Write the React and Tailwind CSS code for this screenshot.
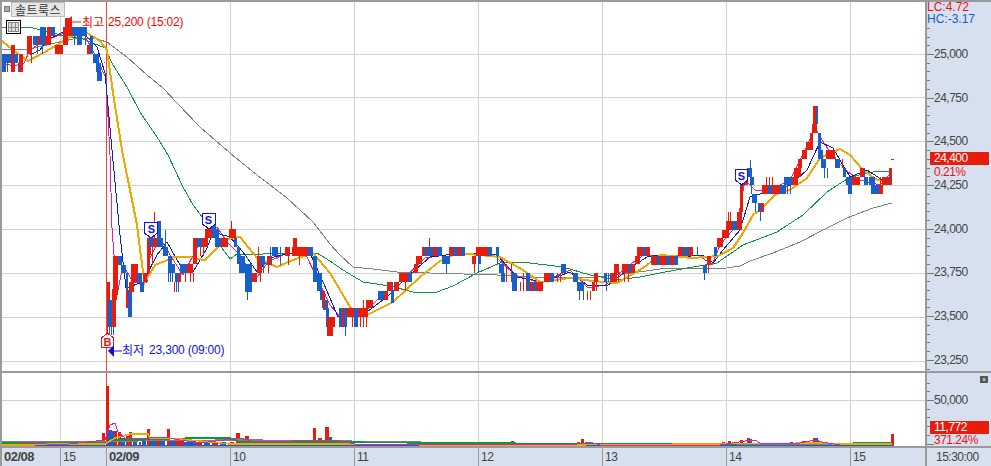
const R = "#e91c0c", B = "#1560cc";

const gridX = [60, 106, 230, 354, 478, 602, 726, 850];
const gridY = [54, 97, 141, 185, 229, 273, 317, 361];

const blocks = [
  [1,18,54,63,"b"],[2,6,54,72,"b"],[11,15,45,72,"r"],[13,17,54,63,"b"],[19,23,54,72,"r"],
  [27,32,36,54,"r"],[33,38,36,45,"b"],[38,43,36,45,"r"],[40,46,27,45,"b"],[45,49,36,45,"r"],[47,51,27,45,"r"],[51,55,27,36,"b"],
  [55,63,45,54,"r"],[63,68,27,45,"r"],[65,72,18,36,"r"],[72,82,27,36,"b"],[77,82,36,45,"b"],[82,87,27,36,"b"],
  [87,93,45,54,"r"],[90,93,36,54,"b"],[93,99,54,63,"b"],[96,101,63,72,"b"],[97,102,72,81,"b"],
  [107,110,282,327,"r"],[108,112,300,327,"b"],[112,116,289,327,"r"],[113,118,256,295,"r"],[118,122,256,265,"b"],[121,126,265,273,"b"],
  [126,128,273,300,"b"],[126,130,291,308,"r"],[128,132,290,317,"b"],[129,134,282,292,"r"],[131,135,264,282,"r"],[135,138,264,273,"b"],[134,138,264,282,"r"],
  [137,142,273,282,"b"],[140,144,282,292,"b"],[143,147,273,282,"r"],[147,150,238,273,"r"],[149,156,238,247,"b"],[153,158,238,247,"r"],[157,161,221,247,"b"],[158,163,238,247,"b"],
  [163,168,247,256,"b"],[168,172,256,273,"b"],[172,175,264,273,"b"],[175,178,273,282,"b"],[178,181,273,282,"r"],[180,187,264,273,"b"],[187,193,264,273,"r"],
  [193,197,238,264,"r"],[197,202,238,247,"b"],[202,207,238,247,"r"],[205,208,229,247,"r"],[211,216,213,238,"b"],[208,212,229,238,"r"],[215,219,229,247,"b"],[218,222,238,247,"b"],[221,228,238,247,"r"],
  [229,236,229,238,"r"],[234,237,238,247,"b"],[237,240,247,264,"b"],[239,245,256,273,"b"],[245,252,264,292,"b"],[252,257,273,282,"r"],[257,262,256,273,"r"],[260,265,256,265,"b"],
  [267,272,256,265,"r"],[272,278,247,256,"b"],[285,290,247,256,"r"],[293,297,238,256,"r"],[292,308,247,256,"r"],[308,313,247,256,"b"],[313,317,256,282,"b"],[317,322,273,291,"b"],
  [320,325,291,300,"b"],[322,325,291,308,"r"],[323,328,300,310,"b"],[326,329,308,327,"b"],[327,333,317,336,"r"],[330,335,317,327,"r"],
  [339,368,308,317,"r"],[339,347,308,327,"b"],[342,344,308,327,"r"],[350,354,308,317,"r"],[354,358,308,327,"b"],[366,373,300,308,"r"],
  [378,386,291,300,"b"],[384,387,291,300,"r"],[387,392,282,291,"r"],[391,394,291,303,"b"],[394,399,282,291,"r"],[399,408,273,282,"r"],[404,408,273,282,"r"],[408,412,273,282,"b"],
  [414,418,264,273,"r"],[416,422,256,264,"r"],[422,442,247,256,"r"],[424,427,247,256,"b"],[428,433,247,256,"b"],[437,442,247,256,"b"],[442,450,256,264,"b"],
  [449,465,247,256,"r"],[453,457,247,256,"b"],[461,465,247,256,"b"],[472,476,256,264,"r"],[476,488,247,256,"r"],[478,481,256,264,"b"],[488,492,247,256,"b"],[496,499,247,256,"b"],
  [499,504,264,273,"b"],[501,504,273,282,"b"],[512,517,273,291,"b"],[526,530,273,291,"b"],[530,543,282,291,"r"],[533,536,282,291,"b"],[544,550,273,282,"r"],[550,554,273,282,"b"],
  [561,566,264,273,"b"],[573,578,273,282,"b"],[577,584,282,291,"b"],[592,595,282,291,"r"],[594,598,273,282,"r"],[604,607,273,282,"b"],[611,617,273,282,"r"],[614,619,264,273,"r"],
  [622,635,264,273,"r"],[628,631,264,273,"b"],[635,640,256,264,"r"],[637,650,247,256,"r"],[643,646,247,256,"b"],[651,660,256,265,"b"],[652,657,256,265,"r"],
  [660,678,256,265,"r"],[666,670,256,265,"b"],[674,678,256,265,"b"],[678,693,247,256,"r"],[682,685,247,256,"b"],[686,689,247,256,"b"],
  [703,707,265,273,"b"],[707,711,256,265,"r"],[714,717,247,256,"b"],[717,723,238,247,"r"],[722,729,230,238,"r"],[726,732,221,230,"r"],[732,737,221,230,"b"],[737,742,212,230,"r"],
  [740,743,185,212,"r"],[743,747,170,185,"r"],[747,752,168,177,"b"],[750,754,177,185,"b"],[752,757,194,203,"b"],[758,761,203,212,"b"],[761,764,203,212,"r"],[762,768,185,194,"r"],
  [768,772,185,194,"b"],[772,778,185,194,"r"],[776,780,185,194,"r"],[780,786,185,194,"b"],[784,792,177,185,"b"],[792,798,177,185,"r"],[794,801,168,177,"r"],[798,802,159,168,"r"],[802,807,150,159,"r"],
  [806,813,142,150,"r"],[810,813,133,142,"r"],[812,817,124,133,"r"],[813,817,106,124,"r"],[816,818,106,124,"b"],[818,821,133,150,"b"],[818,823,150,159,"b"],[821,826,159,168,"b"],
  [826,835,150,159,"r"],[835,840,159,168,"b"],[843,846,168,177,"b"],[848,852,185,194,"b"],[846,852,177,185,"b"],[852,860,177,185,"r"],[860,864,168,177,"r"],[864,868,177,185,"b"],[869,875,177,185,"b"],
  [871,875,185,194,"b"],[875,880,185,194,"b"],[879,883,185,194,"r"],[882,888,177,185,"r"],[888,890,177,185,"b"],[889,892,168,185,"r"],[891,894,159,160,"r"],
];

const wicks = [
  [7,63,72,"r"],[18,63,72,"b"],[31,54,63,"r"],[37,45,54,"b"],[42,45,54,"b"],[66,36,45,"r"],[74,36,45,"b"],[85,36,45,"b"],[104,62,63,"r"],
  [107,282,335,"r"],[109,327,335,"b"],[111,327,335,"b"],[113,327,335,"b"],[116,282,300,"r"],[154,212,240,"r"],[152,247,265,"r"],[150,247,255,"r"],[165,230,250,"b"],
  [168,273,282,"b"],[170,273,282,"b"],[172,273,282,"b"],[174,282,292,"r"],[176,282,292,"b"],[178,282,292,"b"],[185,273,282,"r"],[190,273,282,"r"],[193,273,282,"r"],[200,247,256,"r"],[203,247,256,"r"],[231,221,229,"r"],[247,292,300,"b"],[258,247,256,"r"],[260,273,282,"r"],[263,265,273,"b"],[268,265,273,"r"],[270,247,265,"b"],[280,247,265,"b"],[288,256,265,"r"],[299,256,265,"r"],[325,300,310,"r"],
  [345,327,336,"b"],[352,317,327,"r"],[360,317,327,"r"],[363,317,327,"r"],[366,317,327,"r"],[363,300,308,"r"],[387,291,300,"r"],[392,282,291,"b"],[405,282,291,"r"],[429,238,247,"r"],[446,264,273,"b"],[474,264,273,"r"],[478,264,273,"b"],[497,256,264,"b"],[504,273,282,"b"],[506,264,282,"r"],[511,264,282,"r"],[520,282,291,"r"],[523,273,291,"r"],[526,282,291,"r"],[557,273,282,"r"],[560,273,282,"r"],[579,291,300,"b"],[583,291,300,"b"],[587,291,300,"r"],[590,291,300,"r"],[596,282,291,"r"],[606,282,291,"b"],[608,273,282,"b"],[610,273,282,"b"],[618,273,282,"r"],[624,273,282,"r"],[628,273,282,"r"],
  [697,247,256,"b"],[704,273,280,"b"],[708,265,273,"r"],[728,212,221,"r"],[730,212,221,"r"],[750,160,168,"b"],[747,177,185,"r"],[751,185,194,"b"],[755,203,212,"b"],[760,212,221,"b"],[766,177,185,"r"],[769,177,185,"r"],[772,177,185,"r"],[790,185,194,"b"],[787,185,194,"r"],[824,168,178,"b"],[827,168,178,"b"],[842,159,168,"r"],[864,168,177,"b"],[880,177,185,"r"],[885,177,185,"r"],
];

const gray = "2,50 30,49 55,43 73,39 93,38 107,42 127,57 147,75 163,88 177,103 200,127 230,153 257,175 287,198 313,222 330,244 340,255 353,267 373,269 397,272 430,273 463,274 497,275 530,277 597,277 617,275 660,269 727,268 740,266 750,261 773,253 800,242 823,230 847,218 873,208 892,203";
const green = "2,28 7,27 33,28 50,32 67,37 80,38 93,43 105,48 113,65 127,87 140,112 157,137 168,155 182,185 193,205 203,218 213,235 222,248 230,259 237,254 263,254 300,253 317,253 330,261 343,270 363,282 390,286 413,292 437,292 453,286 477,273 500,263 510,262 530,263 563,267 590,275 617,280 640,277 660,273 693,267 717,263 743,245 777,232 803,215 827,192 850,177 873,172 892,171";
const orange = "2,41 13,50 28,61 43,53 57,45 70,37 87,33 100,41 107,50 113,93 122,150 127,175 137,225 143,272 145,282 155,265 165,261 173,257 190,257 197,259 205,260 217,248 230,238 240,237 257,258 277,267 293,260 313,253 330,273 343,295 353,312 367,315 393,302 420,277 440,261 457,253 480,255 500,257 523,270 540,282 570,278 593,281 617,283 643,268 660,255 693,258 718,256 733,248 743,233 753,215 760,210 777,193 790,190 807,178 820,158 840,149 850,155 863,170 877,180 892,182";
const navy = "30,55 40,50 47,40 67,30 83,33 97,47 105,73 112,150 120,235 126,288 143,282 157,255 167,242 180,265 193,272 207,248 213,232 230,237 243,252 257,272 270,258 290,253 310,253 320,275 330,298 338,317 363,315 387,297 407,277 430,257 463,253 497,255 517,277 543,282 570,272 587,285 607,286 630,268 647,257 660,255 680,257 703,255 713,263 723,250 740,230 750,197 767,192 790,185 807,170 820,142 833,148 850,177 867,170 887,183";
const pink = "2,63 14,66 24,63 30,50 42,42 60,35 72,30 84,34 95,55 106,78 108,117 110,155 112,228 117,295 123,265 133,282 147,282 150,258 160,238 170,255 183,275 197,248 217,227 227,242 240,255 255,280 268,262 285,254 305,253 318,280 330,305 340,317 362,315 380,297 405,277 425,258 460,253 495,256 515,275 540,283 570,270 588,288 605,285 628,266 645,254 660,258 680,255 700,256 712,265 720,245 737,225 745,180 755,190 770,190 790,180 805,150 815,128 825,145 845,170 860,180 880,185 892,172";

const volBars = [
  [11,14,442,R],[21,25,443,R],[27,34,442,R],[68,71,442,R],[94,97,441,R],[96,99,440,R],[102,105,433,R],
  [106,109,386,R],[108,112,430,B],[112,115,431,B],[114,117,431,R],[118,121,432,R],[121,125,438,B],[126,129,436,R],[129,132,432,R],[133,137,441,B],[139,141,442,R],[142,146,440,B],[147,150,429,R],[150,156,437,B],[156,160,438,R],[160,165,440,B],[167,170,429,R],[170,175,440,B],[175,178,439,R],[178,184,441,R],[184,190,442,B],[190,196,441,B],[196,202,442,R],[204,210,442,B],[212,218,442,R],[220,226,442,B],
  [230,234,442,R],[236,240,433,R],[240,243,440,R],[243,246,441,B],[245,249,436,R],[250,256,442,B],[259,262,439,R],[263,268,442,B],[270,275,442,R],[278,284,443,B],[288,294,443,R],[298,304,443,B],[313,316,428,R],[318,322,438,R],[322,325,440,B],[325,329,427,R],[329,332,437,B],
  [333,337,441,B],[338,342,441,R],[342,345,442,B],[345,348,441,R],[348,354,442,B],[422,425,442,R],[511,514,441,R],[577,580,442,R],[581,584,439,R],
  [703,706,443,R],[722,725,442,R],[728,731,441,R],[740,743,440,R],[747,750,438,R],[749,752,439,B],[790,793,442,R],[802,805,441,R],[807,810,441,R],[813,816,438,R],[815,818,438,B],[869,872,442,R],[875,878,442,R],[891,894,434,R],
];

function Marker({ d, stroke }) {
  return <path d={d} stroke={stroke} fill="white" strokeWidth="1.2" />;
}

function PriceChart() {
  return (
    <svg viewBox="2 2 923 369" className="block w-[923px] h-[369px]" shapeRendering="crispEdges">
      {gridY.map((y) => <rect key={y} x="2" y={y} width="923" height="1" fill="#d2d2d2" />)}
      {gridX.map((x) => <rect key={x} x={x} y="2" width="1" height="369" fill={x === 106 ? "#f0453a" : "#d2d2d2"} />)}
      <polyline points={gray} fill="none" stroke="#808080" strokeWidth="1" />
      <polyline points={green} fill="none" stroke="#0a9a3c" strokeWidth="1" />
      <polyline points={pink} fill="none" stroke="#e020b4" strokeWidth="1" />
      <polyline points={navy} fill="none" stroke="#0c22b0" strokeWidth="1" />
      <polyline points={orange} fill="none" stroke="#f0a800" strokeWidth="2" />
      {blocks.map(([a, b, t, u, c], i) => (
        <rect key={i} x={a} y={t} width={b - a} height={u - t} fill={c === "r" ? R : B} />
      ))}
      {wicks.map(([x, t, u, c], i) => (
        <rect key={i} x={x} y={t} width="1" height={u - t} fill={c === "r" ? R : B} />
      ))}
      <Marker d="M144.5 222.5H157.5V233L151 238L144.5 233Z" stroke="#1010f0" />
      <Marker d="M202.5 213.5H215.5V224L209 229L202.5 224Z" stroke="#1010f0" />
      <Marker d="M735.5 169.5H747.5V180L741.5 185L735.5 180Z" stroke="#1010f0" />
      <Marker d="M101.5 347.5H113.5V338L107.5 333L101.5 338Z" stroke="#e81010" />
      <g shapeRendering="auto">
        <path d="M65 22L72 16V28Z" fill={R} />
        <rect x="72" y="21.5" width="9" height="1" fill={R} />
        <path d="M108 351L114 345V357Z" fill="#0a10e0" />
        <rect x="114" y="350.5" width="8" height="1" fill="#0a10e0" />
      </g>
    </svg>
  );
}

function VolumeChart() {
  return (
    <svg viewBox="2 373 923 73" className="block w-[923px] h-[73px]" shapeRendering="crispEdges">
      <rect x="2" y="400" width="923" height="1" fill="#d2d2d2" />
      {gridX.map((x) => <rect key={x} x={x} y="373" width="1" height="73" fill={x === 106 ? "#f0453a" : "#d2d2d2"} />)}
      {volBars.map(([a, b, t, c], i) => <rect key={i} x={a} y={t} width={b - a} height={446 - t} fill={c} />)}
      <rect x="2" y="445" width="892" height="1" fill="#1560cc" />
      <polyline points="2,442 106,442 115,441 240,440 350,441 360,442 420,442 425,443 510,443 540,444 892,444" fill="none" stroke="#808080" strokeWidth="1.4" />
      <polyline points="2,443 105,443 115,440 140,440 190,438 230,438 240,442 330,442 350,442 420,443 510,443 540,444 700,444 892,443" fill="none" stroke="#0a9a3c" strokeWidth="1.4" />
      <polyline points="2,445 35,445 36,444 105,444 115,438 130,434 148,434 150,438 180,439 230,444 330,444 440,445 560,445 700,444 820,443 835,444 892,444" fill="none" stroke="#f0a800" strokeWidth="1.4" />
      <polyline points="20,444 34,443 60,445 105,440 110,425 115,423 118,432 125,438 150,438 165,437 180,440 200,443 240,438 255,442 330,440 340,441 360,445 580,444 590,442 600,445 720,445 745,441 755,440 760,443 800,443 815,440 822,442 840,445" fill="none" stroke="#e020b4" strokeWidth="1" />
    </svg>
  );
}

function AxisTicks({ h, start, offset = 0, min = 0 }) {
  const ticks = [];
  for (let i = 0; start + i * 8.74 < h; i++) {
    const y = Math.round(start + i * 8.74);
    if (y < min) continue;
    ticks.push(<rect key={i} x="0" y={y} width={(i + offset) % 5 === 0 ? 7 : 3} height="1" fill="#777" />);
  }
  return (
    <svg width="66" height={h} className="absolute left-0 top-0" shapeRendering="crispEdges">{ticks}</svg>
  );
}

const axisFont = "font-['Liberation_Sans','Noto_Sans_CJK_KR',sans-serif] text-[12px] tracking-[-0.5px] text-[#444]";
const tagText = "font-['Liberation_Sans'] tracking-[-0.5px] text-[12px]";
const prices = ["25,000", "24,750", "24,500", "24,250", "24,000", "23,750", "23,500", "23,250"];

function TimeCell({ w, label, bold }) {
  return (
    <div className={`${w} shrink-0 border-r border-[#9a9a9a] pl-[2px] flex items-center h-full ${axisFont} ${bold ? "font-bold text-[13px]" : ""}`}>
      {label}
    </div>
  );
}

function Letter({ pos, color, children }) {
  return <div className={`absolute ${pos} w-[13px] text-center text-[11px] leading-none font-bold ${color} font-['Liberation_Sans']`}>{children}</div>;
}

export default function App() {
  return (
    <div className="w-[991px] h-[466px] overflow-hidden bg-white border-l-2 border-t-2 border-[#9a9a9a] flex flex-col relative">
      <div className="flex h-[369px] shrink-0">
        <div className="w-[923px] shrink-0 relative">
          <PriceChart />
          <div className="absolute left-[2px] top-[4px] w-[6px] h-[6px] bg-[#aaa] border border-[#777]" />
          <div className="absolute left-[9px] top-0 w-[54px] h-[15px] bg-[#e6e6e6] border border-[#bbb] flex items-center justify-center font-['Noto_Sans_CJK_KR',sans-serif] text-[12px] leading-none text-[#333] tracking-[0.5px]">솔트룩스</div>
          <div className="absolute left-[4px] top-[18px] w-[15px] h-[14px] bg-white border border-black p-[1px]">
            <div className="w-full h-full grid grid-cols-3 grid-rows-2 gap-px bg-[#888] border border-[#888]">
              {[0, 1, 2, 3, 4, 5].map((i) => <div key={i} className="bg-[#ddd]" />)}
            </div>
          </div>
          <div className="absolute left-[80px] top-[12px] flex items-center gap-[4px] font-['Noto_Sans_CJK_KR',sans-serif] text-[12px] leading-[16px] text-[#f00] whitespace-nowrap">
            <span>최고</span><span className="font-['Liberation_Sans'] tracking-[-0.2px]">25,200 (15:02)</span>
          </div>
          <div className="absolute left-[120px] top-[340px] flex items-center gap-[5px] font-['Noto_Sans_CJK_KR',sans-serif] text-[12px] leading-[16px] text-[#0a10f0] whitespace-nowrap">
            <span>최저</span><span className="font-['Liberation_Sans'] tracking-[-0.2px]">23,300 (09:00)</span>
          </div>
          <Letter pos="left-[143px] top-[222px]" color="text-[#1010f0]">S</Letter>
          <Letter pos="left-[200px] top-[213px]" color="text-[#1010f0]">S</Letter>
          <Letter pos="left-[733px] top-[169px]" color="text-[#1010f0]">S</Letter>
          <Letter pos="left-[99px] top-[335px]" color="text-[#e81010]">B</Letter>
        </div>
        <div className="flex-1 relative bg-[#d6e0ef] border-l-2 border-[#9a9a9a]">
          <AxisTicks h={369} start={8.3} min={24} />
          <div className="absolute left-0 top-0 flex flex-col gap-[1px] font-['Liberation_Sans'] text-[12px] leading-[11px]">
            <div className="text-[#f01010]">LC:4.72</div>
            <div className="text-[#1560cc]">HC:-3.17</div>
          </div>
          <div className={`flex flex-col pl-[7px] pt-[45px] ${axisFont}`}>
            {prices.map((p) => <div key={p} className="h-[43.7px] leading-[14px]">{p}</div>)}
          </div>
          <div className={`absolute left-[3px] top-[150px] w-[59px] h-[13px] bg-[#e91c0c] text-white leading-[13px] pl-[4px] ${tagText}`}>24,400</div>
          <div className={`absolute left-[7px] top-[164px] text-[#f01010] leading-[12px] ${tagText}`}>0.21%</div>
        </div>
      </div>
      <div className="h-[2px] shrink-0 bg-[#9a9a9a]" />
      <div className="flex h-[73px] shrink-0">
        <div className="w-[923px] shrink-0"><VolumeChart /></div>
        <div className="flex-1 relative bg-[#d6e0ef] border-l-2 border-[#9a9a9a]">
          <AxisTicks h={73} start={9.5} offset={3} />
          <div className={`pl-[7px] pt-[20px] leading-[14px] ${axisFont}`}>50,000</div>
          <div className="absolute right-[3px] top-[3px] w-[8px] h-[7px] bg-[#555] text-white text-[7px] leading-[7px] text-center font-['Liberation_Sans']">×</div>
          <div className={`absolute left-[3px] top-[48px] w-[59px] h-[13px] bg-[#e91c0c] text-white leading-[13px] pl-[4px] ${tagText}`}>11,772</div>
          <div className={`absolute left-[7px] top-[62px] text-[#f01010] leading-[11px] ${tagText}`}>371.24%</div>
        </div>
      </div>
      <div className="flex h-[18px] shrink-0 bg-[#d6e0ef] border-y-2 border-[#9a9a9a] box-content">
        <TimeCell w="w-[59px]" label="02/08" bold />
        <TimeCell w="w-[46px]" label="15" />
        <TimeCell w="w-[124px]" label="02/09" bold />
        <TimeCell w="w-[124px]" label="10" />
        <TimeCell w="w-[124px]" label="11" />
        <TimeCell w="w-[124px]" label="12" />
        <TimeCell w="w-[124px]" label="13" />
        <TimeCell w="w-[124px]" label="14" />
        <TimeCell w="w-[75px]" label="15" />
        <div className={`flex-1 pl-[9px] flex items-center border-l border-[#9a9a9a] ${axisFont}`}>15:30:00</div>
      </div>
    </div>
  );
}
